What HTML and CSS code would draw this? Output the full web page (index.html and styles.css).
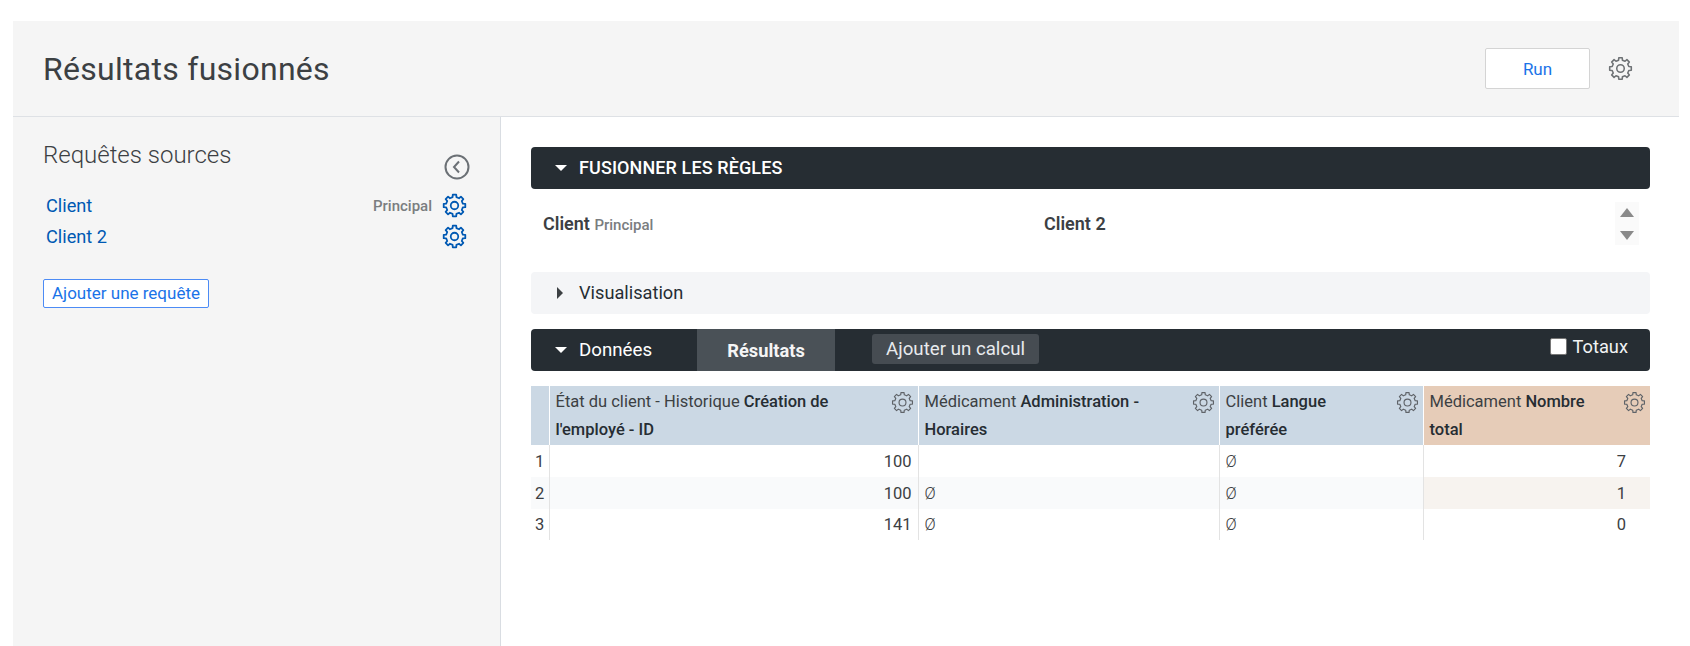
FILE: index.html
```html
<!DOCTYPE html>
<html lang="fr">
<head>
<meta charset="utf-8">
<title>Résultats fusionnés</title>
<link rel="stylesheet" href="styles.css">
</head>
<body>
<svg class="defs" width="0" height="0" aria-hidden="true">
  <symbol id="gear" viewBox="0 0 24 24">
    <path fill="none" stroke="currentColor" stroke-linejoin="round" d="M10.15 4.01L10.36 1.63H13.64L13.85 4.01L16.34 5.04L18.17 3.51L20.49 5.83L18.96 7.66L19.99 10.15L22.37 10.36V13.64L19.99 13.85L18.96 16.34L20.49 18.17L18.17 20.49L16.34 18.96L13.85 19.99L13.64 22.37H10.36L10.15 19.99L7.66 18.96L5.83 20.49L3.51 18.17L5.04 16.34L4.01 13.85L1.63 13.64V10.36L4.01 10.15L5.04 7.66L3.51 5.83L5.83 3.51L7.66 5.04Z"/>
    <circle cx="12" cy="12" r="3.6" fill="none" stroke="currentColor"/>
  </symbol>
</svg>
<div class="app">
  <header class="top">
    <h1 class="title">Résultats fusionnés</h1>
    <button class="run">Run</button>
    <svg class="gear gear-top"><use href="#gear"/></svg>
  </header>
  <div class="body">
    <aside class="side">
      <div class="side-head">
        <h2 class="side-title">Requêtes sources</h2>
        <svg class="back" viewBox="0 0 26 26"><circle cx="13" cy="13" r="11.5" fill="none" stroke="currentColor" stroke-width="2"/><path d="M15 7.5L10 13L15 18.5" fill="none" stroke="currentColor" stroke-width="2"/></svg>
      </div>
      <div class="query"><a class="q-name">Client</a><span class="q-tag">Principal</span><svg class="gear gear-blue"><use href="#gear"/></svg></div>
      <div class="query"><a class="q-name">Client 2</a><svg class="gear gear-blue"><use href="#gear"/></svg></div>
      <button class="add">Ajouter une requête</button>
    </aside>
    <main class="main">
      <div class="bar">
        <span class="tri-down"></span><span class="bar-label caps">FUSIONNER LES RÈGLES</span>
      </div>
      <div class="merge">
        <div class="merge-col"><b>Client</b> <span class="merge-tag">Principal</span></div>
        <div class="merge-col"><b>Client 2</b></div>
        <div class="arrows"><span class="arrow-up"></span><span class="arrow-down"></span></div>
      </div>
      <div class="bar bar-light">
        <span class="tri-right"></span><span class="bar-label">Visualisation</span>
      </div>
      <div class="bar bar-data">
        <span class="tri-down"></span><span class="bar-label label-data">Données</span>
        <span class="tab">Résultats</span>
        <span class="calc">Ajouter un calcul</span>
        <label class="totals"><span class="check"></span>Totaux</label>
      </div>
      <table class="grid">
        <colgroup><col class="c0"><col class="c1"><col class="c2"><col class="c3"><col class="c4"></colgroup>
        <thead>
          <tr>
            <th class="dim"></th>
            <th class="dim"><div class="th">État du client - Historique <b>Création de l'employé - ID</b><svg class="gear gear-th"><use href="#gear"/></svg></div></th>
            <th class="dim"><div class="th">Médicament <b>Administration - Horaires</b><svg class="gear gear-th"><use href="#gear"/></svg></div></th>
            <th class="dim"><div class="th">Client <b>Langue préférée</b><svg class="gear gear-th"><use href="#gear"/></svg></div></th>
            <th class="meas"><div class="th">Médicament <b>Nombre total</b><svg class="gear gear-th"><use href="#gear"/></svg></div></th>
          </tr>
        </thead>
        <tbody>
          <tr><td class="idx">1</td><td class="num">100</td><td></td><td class="null">Ø</td><td class="num">7</td></tr>
          <tr class="odd"><td class="idx">2</td><td class="num">100</td><td class="null">Ø</td><td class="null">Ø</td><td class="num m">1</td></tr>
          <tr class="last"><td class="idx">3</td><td class="num">141</td><td class="null">Ø</td><td class="null">Ø</td><td class="num">0</td></tr>
        </tbody>
      </table>
    </main>
  </div>
</div>
</body>
</html>
```
FILE: styles.css
```css
* { box-sizing: border-box; }
html, body { margin: 0; height: 100%; background: #fff; }
body { padding: 21px 11px 0 13px; font-family: Roboto, "Liberation Sans", sans-serif; color: #262d33; overflow: hidden; }
.defs { position: absolute; }
.app { display: flex; flex-direction: column; height: 100%; }
.top { height: 96px; flex: none; display: flex; align-items: center; padding: 0 46px 0 30px; background: #f5f5f5; border-bottom: 1px solid #dee1e5; }
.title { margin: 0; flex: 1; font-size: 32px; font-weight: 400; color: #3c4043; letter-spacing: 0.28px; }
.run { width: 105px; height: 41px; background: #fff; border: 1px solid #d4d4d4; border-radius: 2px; color: #1a73e8; font: 400 17px Roboto, sans-serif; }
.gear { display: block; flex: none; width: 25px; height: 25px; stroke-width: 1.5; }
.gear-top { margin-left: 18px; color: #6e7275; }
.body { flex: 1; display: flex; min-height: 0; }
.side { width: 488px; flex: none; background: #f5f5f5; border-right: 1px solid #d9dde2; padding: 24px 33px 0 30px; }
.side-head { display: flex; justify-content: space-between; height: 49px; }
.side-title { margin: 0; font-size: 24px; font-weight: 300; color: #3c4043; line-height: 28px; }
.back { width: 26px; height: 26px; margin-top: 13px; margin-right: -3px; color: #6b7075; }
.query { display: flex; align-items: center; height: 31px; padding-left: 3px; }
.q-name { flex: 1; font-size: 18.2px; color: #0059b3; }
.q-tag { font-size: 15px; font-weight: 500; color: #7a7d80; margin-right: 10px; }
.gear-blue { color: #0059b3; stroke-width: 1.7; }
.add { display: block; margin-top: 27px; height: 29px; width: 166px; padding: 0 0 2px; background: #fff; border: 1px solid #4c8bf5; border-radius: 2px; color: #1a73e8; font: 400 17px Roboto, sans-serif; }
.main { flex: 1; min-width: 0; padding: 30px 29px 0 30px; background: #fff; }
.bar { display: flex; align-items: center; height: 42px; padding: 0 0 1px 24px; background: #262d33; border-radius: 4px; color: #fff; position: relative; }
.bar-label { font-size: 18.2px; margin-left: 12px; }
.label-data { font-size: 18.7px; }
.caps { font-weight: 500; font-size: 18px; letter-spacing: 0.1px; }
.tri-down { width: 0; height: 0; border-left: 6.5px solid transparent; border-right: 6.5px solid transparent; border-top: 6px solid currentColor; }
.tri-right { width: 0; height: 0; margin: 0 4px 0 2px; border-top: 6.5px solid transparent; border-bottom: 6.5px solid transparent; border-left: 6.5px solid #3c4043; }
.merge { display: flex; align-items: center; height: 83px; padding: 0 12px; position: relative; font-size: 18px; }
.merge-col { width: 501px; padding-bottom: 15px; color: #3c4043; }
.merge-col b { font-weight: 600; }
.merge-tag { font-size: 15px; color: #7a7d80; font-weight: 500; }
.arrows { margin-left: auto; margin-right: -1px; margin-bottom: 14px; width: 24px; height: 43px; display: flex; flex-direction: column; align-items: center; justify-content: center; gap: 14px; background: #fafafa; }
.arrow-up { width: 0; height: 0; border-left: 7px solid transparent; border-right: 7px solid transparent; border-bottom: 9.5px solid #8a8a8a; }
.arrow-down { width: 0; height: 0; border-left: 7px solid transparent; border-right: 7px solid transparent; border-top: 9.5px solid #8a8a8a; }
.bar-light { background: #f4f5f7; color: #262d33; }
.bar-data { margin-top: 15px; }
.tab { align-self: stretch; width: 138px; margin: 0 0 -1px 45px; display: flex; align-items: center; justify-content: center; background: #4a5157; font-weight: 700; font-size: 18.3px; color: #f5f5f5; }
.calc { height: 30px; width: 167px; margin-left: 37px; margin-top: -2px; display: flex; align-items: center; justify-content: center; background: #464c52; border-radius: 3px; font-size: 18.7px; color: #e8eaed; }
.totals { margin-left: auto; margin-right: 22px; margin-bottom: 6px; display: flex; align-items: center; font-size: 18.3px; color: #f1f3f4; }
.check { width: 17px; height: 17px; margin-right: 5px; background: #fff; border: 1px solid #767676; border-radius: 2px; }
.grid { width: 100%; margin-top: 15px; border-collapse: collapse; table-layout: fixed; font-size: 16.5px; color: #3c4043; }
.c0 { width: 18px; } .c1 { width: 369px; } .c2 { width: 301px; } .c3 { width: 204px; } .c4 { width: 227px; }
.grid th { height: 59px; padding: 0; text-align: left; font-weight: 400; vertical-align: top; border-left: 1px solid #fff; }
.grid th:first-child { border-left: 0; }
.dim { background: #cbd8e4; }
.meas { background: #e6ccb8; }
.th { position: relative; padding: 2px 38px 0 6px; line-height: 28px; }
.th b { font-weight: 500; color: #262d33; }
.gear-th { position: absolute; top: 5px; right: 4px; width: 23px; height: 23px; color: #5f6368; stroke-width: 1.2; }
.grid td { height: 32px; padding: 0 6px; border-left: 1px solid #e3e3e3; }
.grid .last td { height: 31px; }
.grid td.idx { border-left: 0; padding: 0 0 0 4px; }
.grid .num { text-align: right; padding-right: 24px; }
.grid td:nth-child(2).num { padding-right: 6px; }
.grid td.null { font-size: 16.5px; font-weight: 300; }
.odd { background: #f9fafb; }
.odd .m { background: #f7f3ef; }
```
